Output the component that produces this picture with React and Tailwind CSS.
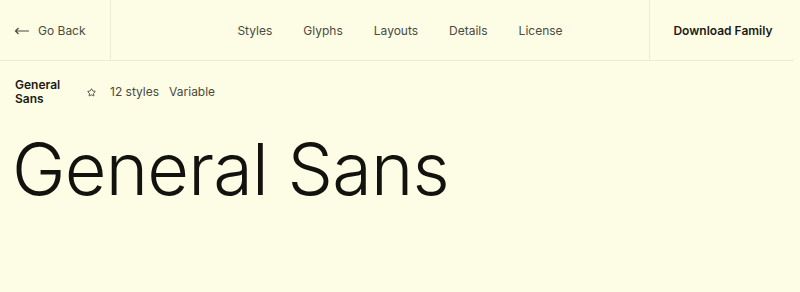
import { Star } from "lucide-react";

const links = ["Styles", "Glyphs", "Layouts", "Details", "License"];

export default function App() {
  return (
    <div className="w-[800px] h-[292px] bg-[#fdfde6] text-[#1b1b16] overflow-hidden" style={{ fontFamily: "Inter, 'Liberation Sans', sans-serif" }}>
      <header className="w-[794px] h-[61px] flex border-b border-[#ebebd6]">
        <a className="w-[111px] shrink-0 flex items-center gap-[8px] pl-[14px] pt-[2px] border-r border-[#ebebd6] text-[12px] text-[#4a4a40]">
          <svg width="16" height="8" viewBox="0 0 16 8" fill="none" stroke="currentColor" strokeWidth="1.2">
            <path d="M15 4H1.5M4.5 1L1.5 4l3 3" />
          </svg>
          Go Back
        </a>
        <nav className="flex-1 flex items-center justify-center gap-[31px] pt-[2px] pl-[40px] text-[12px] text-[#4a4a40]">
          {links.map((l) => (
            <span key={l}>{l}</span>
          ))}
        </nav>
        <a className="w-[145px] shrink-0 flex items-center justify-center pt-[2px] pl-[2px] border-l border-[#ebebd6] text-[12px] font-semibold text-[#1b1b16]">
          Download Family
        </a>
      </header>

      <div className="flex items-center pl-[15px] pt-[17px] text-[12px]">
        <div className="w-[56px] font-semibold leading-[14px]">General Sans</div>
        <Star size={9} strokeWidth={2.2} className="ml-[16px] text-[#33332b]" />
        <span className="ml-[14px] text-[#4a4a40]">12 styles</span>
        <span className="ml-[10px] text-[#4a4a40]">Variable</span>
      </div>

      <h1 className="pl-[12px] mt-[27px] text-[72px] font-light leading-none tracking-[-0.8px] text-[#12120e]">
        General Sans
      </h1>
    </div>
  );
}
